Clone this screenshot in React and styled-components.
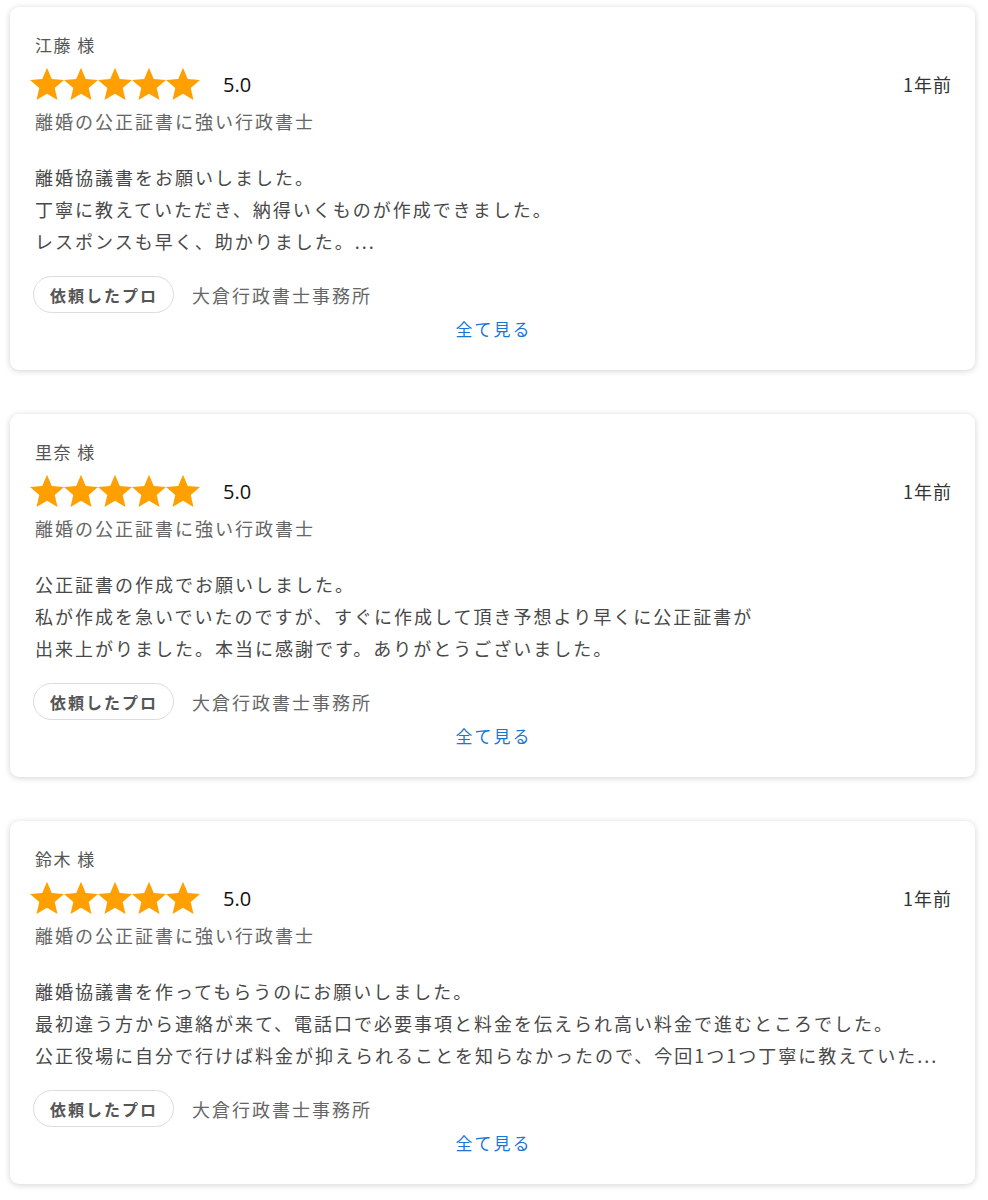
import React from "react";
import styled, { createGlobalStyle } from "styled-components";

const GlobalStyle = createGlobalStyle`
  body {
    margin: 0;
    background: #fff;
    font-family: "Noto Sans CJK JP", "Noto Sans", sans-serif;
  }
`;

const Page = styled.div`
  display: flex;
  flex-direction: column;
  gap: 44px;
  padding: 7px 13px 14px 10px;
`;

const Card = styled.div`
  background: #fff;
  border-radius: 9px;
  box-shadow: 0 1px 6px rgba(0, 0, 0, 0.18);
  padding: 24px 23px 27px 25px;
  display: flex;
  flex-direction: column;
`;

const Name = styled.div`
  font-size: 17px;
  line-height: 28px;
  letter-spacing: 1.5px;
  color: #555;
`;

const RatingRow = styled.div`
  display: flex;
  align-items: center;
  height: 36px;
  margin-top: 7px;
  margin-left: -5px;
`;

const Stars = styled.div`
  display: flex;
  align-items: center;
`;

const Score = styled.span`
  margin-left: 23px;
  font-family: "Open Sans", "Noto Sans", sans-serif;
  font-size: 20px;
  color: #111;
`;

const Ago = styled.span`
  margin-left: auto;
  font-size: 18px;
  letter-spacing: 1px;
  color: #333;
`;

const Subtitle = styled.div`
  margin-top: 5px;
  font-size: 18px;
  line-height: 28px;
  letter-spacing: 2px;
  color: #666;
`;

const Body = styled.p`
  margin: 26px 0 0;
  font-size: 18px;
  line-height: 32px;
  letter-spacing: 2px;
  color: #484848;
  white-space: pre-line;
`;

const ProRow = styled.div`
  display: flex;
  align-items: center;
  gap: 18px;
  margin-top: 19px;
  margin-left: -2px;
`;

const Chip = styled.span`
  display: inline-flex;
  align-items: center;
  height: 37px;
  box-sizing: border-box;
  padding: 0 15px 0 16px;
  border: 1px solid #dcdcdc;
  border-radius: 19px;
  font-size: 16px;
  font-weight: 700;
  letter-spacing: 2px;
  color: #555;
`;

const Office = styled.span`
  font-size: 18px;
  letter-spacing: 2px;
  color: #666;
`;

const SeeAll = styled.a`
  align-self: center;
  margin-top: 2px;
  font-size: 17px;
  line-height: 28px;
  letter-spacing: 2px;
  color: #1976d2;
  text-decoration: none;
  cursor: pointer;
`;

const Star = () => (
  <svg width="34" height="34" viewBox="2 1.6 20 20" fill="#FFA000">
    <path d="M12 17.27L18.18 21l-1.64-7.03L22 9.24l-7.19-.61L12 2 9.19 8.63 2 9.24l5.46 4.73L5.82 21z" />
  </svg>
);

const reviews = [
  {
    name: "江藤 様",
    body: "離婚協議書をお願いしました。\n丁寧に教えていただき、納得いくものが作成できました。\nレスポンスも早く、助かりました。...",
  },
  {
    name: "里奈 様",
    body: "公正証書の作成でお願いしました。\n私が作成を急いでいたのですが、すぐに作成して頂き予想より早くに公正証書が\n出来上がりました。本当に感謝です。ありがとうございました。",
  },
  {
    name: "鈴木 様",
    body: "離婚協議書を作ってもらうのにお願いしました。\n最初違う方から連絡が来て、電話口で必要事項と料金を伝えられ高い料金で進むところでした。\n公正役場に自分で行けば料金が抑えられることを知らなかったので、今回1つ1つ丁寧に教えていた...",
  },
];

const ReviewCard = ({ name, body }) => (
  <Card>
    <Name>{name}</Name>
    <RatingRow>
      <Stars>
        {[0, 1, 2, 3, 4].map((i) => (
          <Star key={i} />
        ))}
      </Stars>
      <Score>5.0</Score>
      <Ago>1年前</Ago>
    </RatingRow>
    <Subtitle>離婚の公正証書に強い行政書士</Subtitle>
    <Body>{body}</Body>
    <ProRow>
      <Chip>依頼したプロ</Chip>
      <Office>大倉行政書士事務所</Office>
    </ProRow>
    <SeeAll>全て見る</SeeAll>
  </Card>
);

export default function App() {
  return (
    <>
      <GlobalStyle />
      <Page>
        {reviews.map((r) => (
          <ReviewCard key={r.name} {...r} />
        ))}
      </Page>
    </>
  );
}
